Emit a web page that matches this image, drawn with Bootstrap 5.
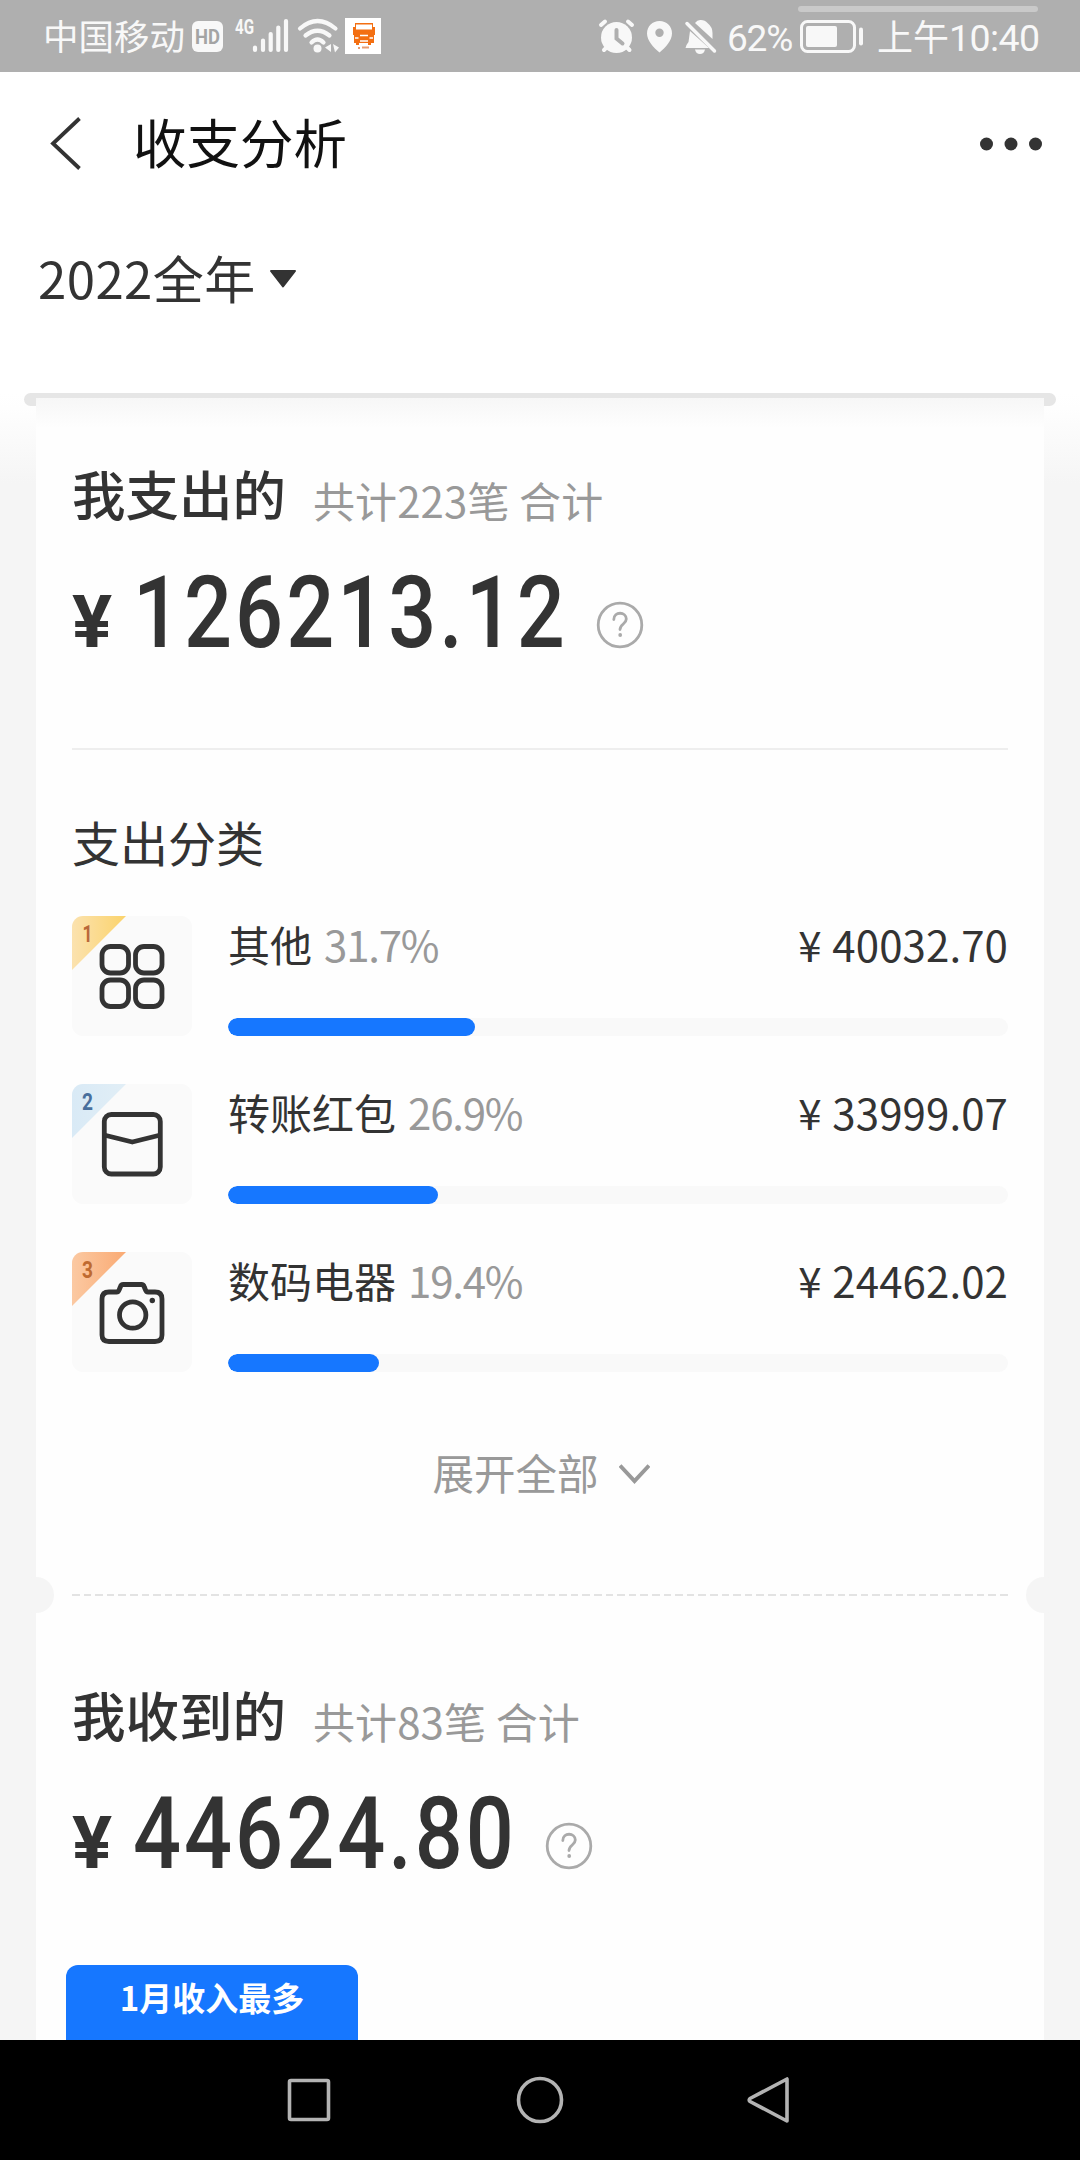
<!DOCTYPE html>
<html lang="zh-CN">
<head>
<meta charset="utf-8">
<title>收支分析</title>
<link href="https://cdn.jsdelivr.net/npm/bootstrap@5.3.0/dist/css/bootstrap.min.css" rel="stylesheet">
<style>
  body { width: 1080px; height: 2160px; overflow: hidden; background: #f5f5f5; color: #333;
    font-family: "Noto Sans CJK SC", sans-serif; line-height: 1; letter-spacing: 0; }
  svg { display: block; flex: none; }
  .status { height: 72px; background: #afafaf; color: #f8f8f8; padding-left: 43px; }
  .status .carrier { font-size: 35.5px; line-height: 70px; width: 145px; white-space: nowrap; }
  .status .level { font-family: Roboto, sans-serif; font-weight: 400; font-size: 37px; width: 73px; letter-spacing: -1.2px; line-height: 77px; white-space: nowrap; }
  .status .clock { font-size: 36px; line-height: 71px; white-space: nowrap; }
  .status .clock span { font-family: Roboto, sans-serif; font-weight: 400; font-size: 37.5px; letter-spacing: -.6px; }
  .scroll-hint { left: 798px; top: 6px; width: 240px; height: 6px; background: #c9c9c9; border-radius: 3px; }
  .topbar { height: 144px; padding: 0 36px 0 48px; }
  .topbar h1 { font-size: 53.5px; line-height: 138px; color: #111; margin-left: 49px; }
  .topbar, .period { background: #fff; }
  .period { height: 177px; padding: 0 38px; font-size: 51px; }
  .period span { line-height: 123px; letter-spacing: .4px; }
  .period svg { margin-left: 13px; }
  .sheet-area { height: 1647px; padding: 0 24px; background: linear-gradient(#fff 0, #fefefe 15px, #f5f5f5 90px); }
  .slot { height: 13px; border-radius: 7px; background: #e6e6e6; }
  .sheet { margin: -8px 12px 0; height: 1642px; padding: 0 36px; background: linear-gradient(#f7f7f7 0, #fafafa 14px, #fefefe 30px, #fefefe 100%); }
  .headline { padding-top: 63px; height: 160px; }
  .headline h2 { font-size: 53.5px; font-weight: 500; line-height: 64px; width: 241px; }
  .headline span, .pct, .expand { color: #999; }
  .headline span { font-size: 42px; line-height: 78px; letter-spacing: .1px; white-space: nowrap; }
  .total { height: 110px; font-family: Roboto, sans-serif; font-weight: 500; }
  .total .yen { font-size: 72px; font-weight: 700; line-height: 130px; width: 61px; }
  .total .yen i, .total .num i { display: block; font-style: normal; transform-origin: 0 50%; }
  .total .yen i { transform: scaleX(1.04); }
  .total .num { font-size: 99.5px; line-height: 110px; }
  .total .num i { transform: scaleX(.85); letter-spacing: 3.5px; white-space: nowrap; }
  .total svg { margin-top: 43px; }
  .rule { height: 2px; background: #eee; }
  .section-name { font-size: 48px; line-height: 56px; padding-top: 63px; height: 166px; }
  .cat { height: 168px; }
  .tile { width: 120px; height: 120px; border-radius: 11px; margin-right: 36px; overflow: hidden; }
  .cat .info { height: 120px; }
  .cat .info > div:first-child { font-size: 42px; line-height: 55px; height: 53px; }
  .pct { margin-left: 12px; letter-spacing: -1.2px; }
  .cash { letter-spacing: .1px; }
  .cash b { font-weight: 400; display: inline-block; width: 34px; }
  .progress { height: 18px; border-radius: 9px; background: #f9f9f9; }
  .progress-bar { background: #1677ff; border-radius: 9px; }
  .expand { font-size: 41.5px; line-height: 48px; height: 157px; padding: 28px 0 0 2px; gap: 20px; }
  .perforation { height: 36px; margin: 0 -54px; }
  .hole { width: 36px; height: 36px; border-radius: 50%; background: #f5f5f5; }
  .dashes { width: 936px; height: 2px; background: repeating-linear-gradient(90deg, #e3e3e3 0 7.5px, transparent 7.5px 11.6px); }
  .second { padding-top: 69px; height: 166px; }
  .tab { width: 292px; height: 77px; margin: 76px 0 0 -6px; border-radius: 12px 12px 0 0; background: #1677ff; color: #fff; font-size: 33px; font-weight: 700; line-height: 64px; }
  .navkeys { height: 120px; background: #000; }
</style>
</head>
<body class="d-flex flex-column position-relative">
<div class="status d-flex flex-shrink-0">
  <div class="carrier">中国移动</div>
  <svg width="202" height="72" viewBox="188 0 202 72" fill="#f8f8f8">
    <rect x="192" y="21" width="31" height="31" rx="6"/>
    <text x="207.500" y="44" font-family="Roboto" font-weight="700" font-size="20" textLength="25" lengthAdjust="spacingAndGlyphs" text-anchor="middle" fill="#a4a4a4">HD</text>
    <text x="235" y="34" font-family="Roboto" font-weight="700" font-size="20" textLength="19" lengthAdjust="spacingAndGlyphs">4G</text>
    <g stroke="#f8f8f8" stroke-width="4.200" stroke-linecap="round"><path d="M255 47.500v2.500M263 40.500v9.500M270.700 34v16M278.300 27.500v22.500M286 21v29"/></g>
    <g fill="none" stroke="#f8f8f8" stroke-width="4.200" stroke-linecap="round"><path d="M300 28.500Q317.500 13.500 335.500 28.500M305.500 35.500Q317.500 26 329.500 35.500M311.500 42.500Q317.500 36.500 323.500 42.500"/></g>
    <circle cx="317.500" cy="48.500" r="4"/><path d="M331 44v8l-6-4.500zM333 44l6 3.500-4 5z"/>
    <rect x="345" y="18" width="36" height="36" fill="#fff"/>
    <path d="M355 23h18v4h2v8h-1v8h-3v2h-3v-2h-9v2h-3v-2h-2v-8h-1v-8h2z" fill="#f36f12"/>
    <path d="M356 24.500h16v5h-16z" fill="#fff"/><path d="M355 38h3.500M369.500 38h3.500M360 35.500h8M360 41h8" stroke="#fff" stroke-width="1.500"/>
    <path d="M358 48h2M362 47.500h7" stroke="#e79b70" stroke-width="2"/>
  </svg>
  <svg style="margin-left:200px" width="137" height="72" viewBox="590 0 137 72" fill="#f8f8f8">
    <circle cx="616.500" cy="37.500" r="15.500"/>
    <path d="M601 25l4-3.500M632 25l-4-3.500M604 50l3-3M629.500 50l-3-3" stroke="#f8f8f8" stroke-width="4" stroke-linecap="round"/>
    <path d="M616.500 30v8.500l6 5" fill="none" stroke="#afafaf" stroke-width="4" stroke-linecap="round"/>
    <path fill-rule="evenodd" d="M659.500 21c7 0 12.500 5 12.500 12.500 0 7-6.500 14-12.500 19-6-5-12.500-12-12.500-19C647 26 652.500 21 659.500 21zm0 7.500a4.200 4.200 0 1 0 0 8.400 4.200 4.200 0 0 0 0-8.400z"/>
    <path d="M690 31l19 17h-23.500l1-3 2-3zM695 23q2.500-3.500 6-3 4 0 6.500 3 5 4 5 10v6zM695 49.500h10q-1 4.500-5 4.500t-5-4.500z"/>
    <path d="M687 23.500l27.500 27.500" stroke="#f8f8f8" stroke-width="3.500" stroke-linecap="round"/>
  </svg>
  <div class="level">62%</div>
  <svg width="77" height="72" viewBox="800 0 77 72" fill="#f8f8f8">
    <rect x="801.500" y="21.500" width="53" height="30" rx="6" fill="none" stroke="#f8f8f8" stroke-width="3"/><rect x="806" y="26" width="31" height="21" rx="2"/><rect x="859" y="27.500" width="4" height="18" rx="2"/>
  </svg>
  <div class="clock">上午<span>10:40</span></div>
  <div class="scroll-hint position-absolute"></div>
</div>

<header class="topbar d-flex flex-shrink-0 align-items-start">
  <svg width="36" height="144" viewBox="48 72 36 144"><path d="M79.500 118.500L53 143.500 79.500 168.500" fill="none" stroke="#333" stroke-width="3.800"/></svg>
  <h1 class="mb-0 fw-normal">收支分析</h1>
  <svg class="ms-auto" width="66" height="144" viewBox="978 72 66 144" fill="#333"><circle cx="986.500" cy="144" r="6.500"/><circle cx="1011" cy="144" r="6.500"/><circle cx="1035.500" cy="144" r="6.500"/></svg>
</header>

<div class="period d-flex flex-shrink-0 align-items-start">
  <span>2022全年</span>
  <svg width="28" height="120" viewBox="0 0 28 120"><path d="M2 55h24L14 70.500z" fill="#333" stroke="#333" stroke-width="2" stroke-linejoin="round"/></svg>
</div>

<main class="sheet-area flex-shrink-0">
  <div class="slot"></div>
  <div class="sheet">
    <div class="headline d-flex"><h2 class="mb-0">我支出的</h2><span>共计223笔 合计</span></div>
    <div class="total d-flex">
      <div class="yen"><i>¥</i></div><div class="num" style="width:463px"><i>126213.12</i></div>
      <svg width="48" height="48" viewBox="0 0 48 48" fill="none" stroke="#aaa" stroke-width="2.800"><circle cx="24" cy="24" r="21.800"/><path d="M17.800 18.500c0-8.500 12.500-8 12.500-.5 0 5-6.300 5-6.300 10.500" stroke-linecap="round"/><circle cx="24.200" cy="34" r="1.900" fill="#aaa" stroke="none"/></svg>
    </div>
    <div style="height:80px"></div>
    <div class="rule"></div>
    <div class="section-name">支出分类</div>

    <div class="cat d-flex">
      <svg class="tile" viewBox="0 0 120 120"><defs><linearGradient id="gold"><stop stop-color="#fbe2af"/><stop offset="1" stop-color="#fbd36b"/></linearGradient></defs><rect width="120" height="120" fill="#fafafa"/><path d="M0 0h54L0 54z" fill="url(#gold)"/><text x="15.500" y="26" text-anchor="middle" font-family="Roboto" font-weight="700" font-size="24" textLength="10" lengthAdjust="spacingAndGlyphs" fill="#b9683a">1</text>
        <g fill="none" stroke="#333" stroke-width="4.800"><rect x="30" y="30.500" width="26.500" height="26.500" rx="8.500"/><rect x="63.500" y="30.500" width="26.500" height="26.500" rx="8.500"/><rect x="30" y="64" width="26.500" height="26.500" rx="8.500"/><rect x="63.500" y="64" width="26.500" height="26.500" rx="8.500"/></g></svg>
      <div class="info flex-grow-1 d-flex flex-column justify-content-between">
        <div class="d-flex"><span>其他</span><span class="pct">31.7%</span><span class="cash ms-auto"><b>¥</b>40032.70</span></div>
        <div class="progress"><div class="progress-bar" style="width:31.7%"></div></div>
      </div>
    </div>
    <div class="cat d-flex">
      <svg class="tile" viewBox="0 0 120 120"><defs><linearGradient id="silver"><stop stop-color="#d9eaf6"/><stop offset="1" stop-color="#e1eef6"/></linearGradient></defs><rect width="120" height="120" fill="#fafafa"/><path d="M0 0h54L0 54z" fill="url(#silver)"/><text x="15.500" y="26" text-anchor="middle" font-family="Roboto" font-weight="700" font-size="24" textLength="11" lengthAdjust="spacingAndGlyphs" fill="#496f9d">2</text>
        <g fill="none" stroke="#333" stroke-width="4.800"><rect x="32.300" y="30.500" width="56" height="59.500" rx="7"/><path d="M32 51l28.300 7L88.500 51" stroke-linejoin="round"/></g></svg>
      <div class="info flex-grow-1 d-flex flex-column justify-content-between">
        <div class="d-flex"><span>转账红包</span><span class="pct">26.9%</span><span class="cash ms-auto"><b>¥</b>33999.07</span></div>
        <div class="progress"><div class="progress-bar" style="width:26.9%"></div></div>
      </div>
    </div>
    <div class="cat d-flex">
      <svg class="tile" viewBox="0 0 120 120"><defs><linearGradient id="bronze"><stop stop-color="#fbc9a2"/><stop offset="1" stop-color="#faaa73"/></linearGradient></defs><rect width="120" height="120" fill="#fafafa"/><path d="M0 0h54L0 54z" fill="url(#bronze)"/><text x="15.500" y="26" text-anchor="middle" font-family="Roboto" font-weight="700" font-size="24" textLength="11" lengthAdjust="spacingAndGlyphs" fill="#bf6a30">3</text>
        <g fill="none" stroke="#333" stroke-width="4.800" stroke-linejoin="round"><path d="M30 83V47q0-7 7-7h7.500q2 0 2.800-2.500l1-2.500q.8-2.500 3-2.500h18q2.200 0 3 2.500l1 2.500q.8 2.500 2.800 2.500H83q7 0 7 7v36q0 6.500-7 6.500H37q-7 0-7-6.500z"/><circle cx="60.700" cy="63" r="13.200"/></g><circle cx="80.300" cy="48.500" r="2.700" fill="#333"/></svg>
      <div class="info flex-grow-1 d-flex flex-column justify-content-between">
        <div class="d-flex"><span>数码电器</span><span class="pct">19.4%</span><span class="cash ms-auto"><b>¥</b>24462.02</span></div>
        <div class="progress"><div class="progress-bar" style="width:19.4%"></div></div>
      </div>
    </div>

    <div class="expand d-flex justify-content-center"><span>展开全部</span><svg width="31" height="50" viewBox="0 0 31 50"><path d="M1 17.500L15.500 33 30 17.500" fill="none" stroke="#999" stroke-width="4"/></svg></div>
    <div class="perforation d-flex align-items-center justify-content-between"><div class="hole"></div><div class="dashes"></div><div class="hole"></div></div>

    <div class="headline second d-flex"><h2 class="mb-0">我收到的</h2><span>共计83笔 合计</span></div>
    <div class="total d-flex">
      <div class="yen"><i>¥</i></div><div class="num" style="width:412px"><i>44624.80</i></div>
      <svg width="48" height="48" viewBox="0 0 48 48" fill="none" stroke="#aaa" stroke-width="2.800"><circle cx="24" cy="24" r="21.800"/><path d="M17.800 18.500c0-8.500 12.500-8 12.500-.5 0 5-6.300 5-6.300 10.500" stroke-linecap="round"/><circle cx="24.200" cy="34" r="1.900" fill="#aaa" stroke="none"/></svg>
    </div>
    <div class="tab text-center">1月收入最多</div>
  </div>
</main>

<nav class="navkeys flex-shrink-0">
  <svg width="1080" height="120" viewBox="0 2040 1080 120" fill="none" stroke="#b3b3b3" stroke-width="3.600" stroke-linejoin="round"><rect x="289.500" y="2080.500" width="39" height="39" rx="1.500"/><circle cx="540" cy="2100" r="21.500"/><path d="M787 2079v42L750 2101.500q-1.500-1.500 0-3z"/></svg>
</nav>
<script src="https://cdn.jsdelivr.net/npm/bootstrap@5.3.0/dist/js/bootstrap.bundle.min.js"></script>
</body>
</html>
